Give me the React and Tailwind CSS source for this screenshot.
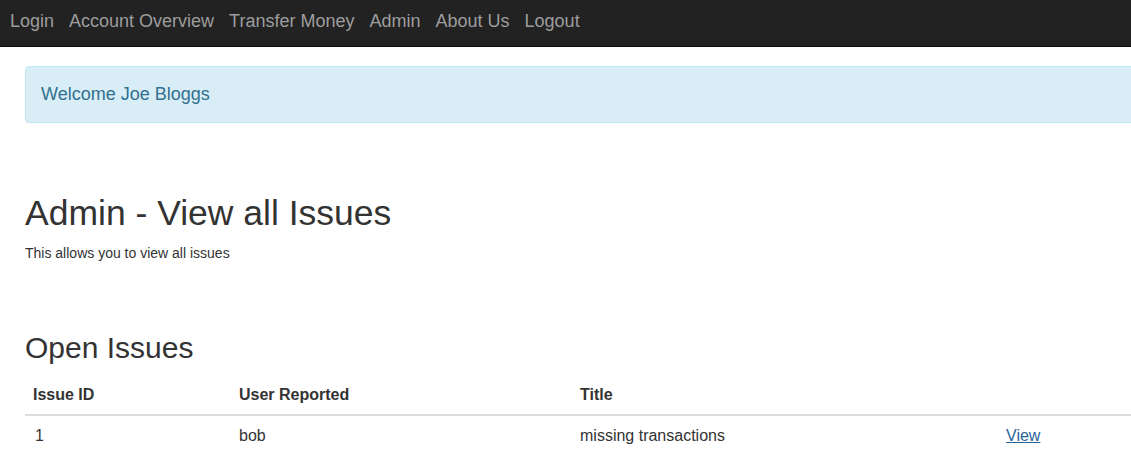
const navLinks = ["Login", "Account Overview", "Transfer Money", "Admin", "About Us", "Logout"];

const issues = [{ id: 1, user: "bob", title: "missing transactions" }];

const App = () => {
   return (
      <div className="w-full min-h-[471px] overflow-hidden bg-white text-[#333] font-['Liberation_Sans',Arial,sans-serif]">
         {/*navbar*/}
         <nav className="h-[47px] bg-[#222] border-b border-[#080808] flex items-start gap-[15px] pl-[10px] pt-[11px]">
            {navLinks.map((link) => (
               <a key={link} href="#" className="text-[18px] leading-[21px] text-[#9d9d9d] whitespace-nowrap">
                  {link}
               </a>
            ))}
         </nav>

         <div className="w-[1140px] ml-[25px]">
            {/*welcome alert*/}
            <div className="mt-[19px] border border-[#bce8f1] bg-[#d9edf7] rounded-[4px] p-[15px] text-[18px] leading-[25px] text-[#31708f]">
               Welcome Joe Bloggs
            </div>

            <h1 className="mt-[70px] text-[35.5px] leading-[40px] text-[#333]">Admin - View all Issues</h1>
            <p className="mt-[10px] text-[14px] leading-[20px] text-[#333]">This allows you to view all issues</p>

            <h2 className="mt-[68px] text-[30px] leading-[33px] text-[#333]">Open Issues</h2>

            <table className="mt-[11px] w-full border-collapse text-[16px] leading-[23px] text-[#333]">
               <thead>
                  <tr className="border-b-2 border-[#ddd]">
                     <th className="w-[206px] p-[8px] text-left font-bold">Issue ID</th>
                     <th className="w-[341px] p-[8px] text-left font-bold">User Reported</th>
                     <th className="w-[426px] p-[8px] text-left font-bold">Title</th>
                     <th className="p-[8px] text-left font-bold"></th>
                  </tr>
               </thead>
               <tbody>
                  {issues.map((issue) => (
                     <tr key={issue.id}>
                        <td className="p-[8px] pl-[10px]">{issue.id}</td>
                        <td className="p-[8px]">{issue.user}</td>
                        <td className="p-[8px]">{issue.title}</td>
                        <td className="p-[8px]">
                           <a href="#" className="text-[#2a6496] underline">View</a>
                        </td>
                     </tr>
                  ))}
               </tbody>
            </table>
         </div>
      </div>
   );
};

export default App;
